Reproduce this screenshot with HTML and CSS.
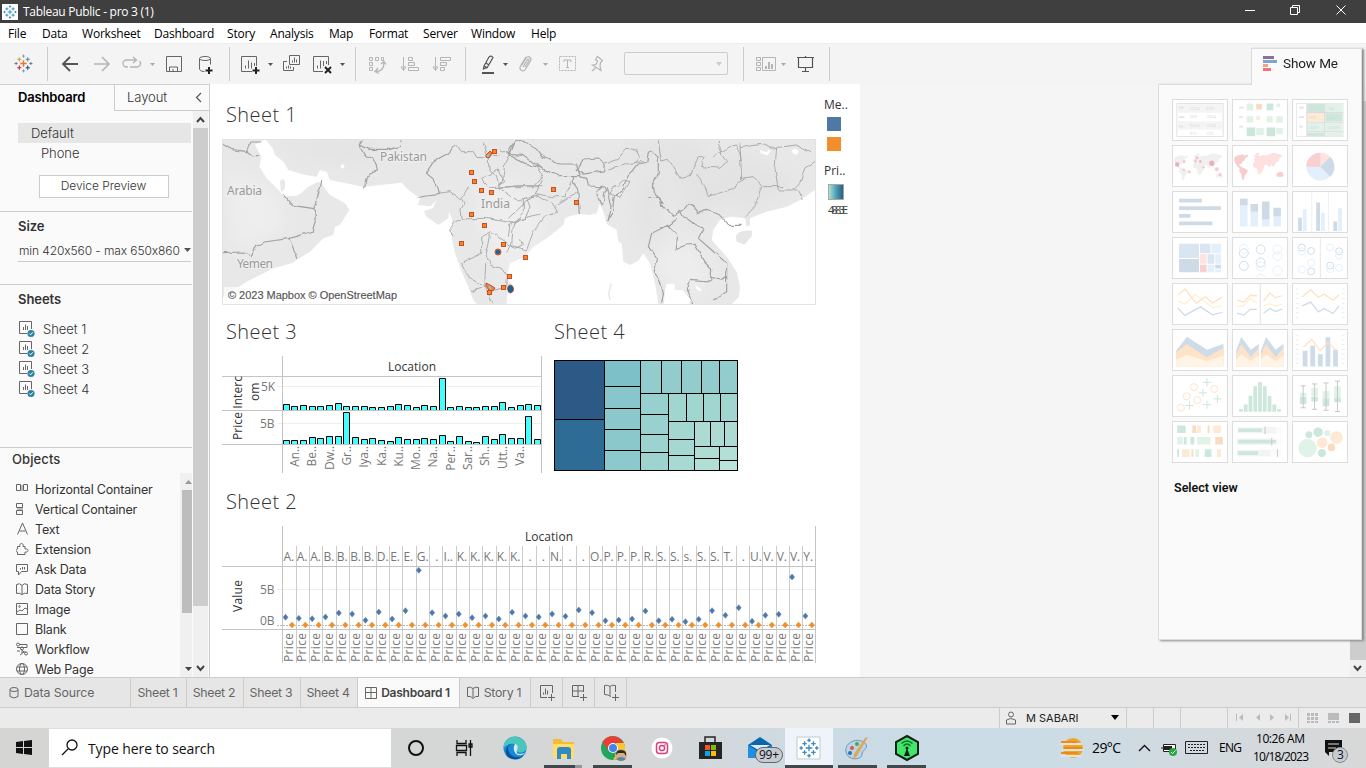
FILE: index.html
```html
<!DOCTYPE html>
<html lang="en">
<head>
<meta charset="utf-8">
<title>Tableau Public - pro 3 (1)</title>
<link rel="stylesheet" href="styles.css">
</head>
<body>
<svg class="defs" width="0" height="0">
  <defs>
    <symbol id="tableau" viewBox="0 0 18 18"><path d="M9 6v6M6 9h6" stroke="#e8762c" stroke-width="1.4"/><path d="M5 3v4M3 5h4" stroke="#c9a04a"/><path d="M13 3v4M11 5h4" stroke="#5b879b"/><path d="M5 11v4M3 13h4" stroke="#c72035"/><path d="M13 11v4M11 13h4" stroke="#1f457e"/><path d="M9 .5v3M7.500 2h3M9 14.500v3M7.500 16h3" stroke="#7199a6" stroke-width=".8"/><path d="M2 7.500v3M.5 9h3M16 7.500v3M14.500 9h3" stroke="#5c6692" stroke-width=".8"/></symbol>
    <symbol id="tableau-blue" viewBox="0 0 18 18"><path d="M9 6v6M6 9h6M5 3v4M3 5h4M13 3v4M11 5h4M5 11v4M3 13h4M13 11v4M11 13h4M9 .5v3M7.500 2h3M9 14.500v3M7.500 16h3M2 7.500v3M.5 9h3M16 7.500v3M14.500 9h3" stroke="#3b8bbd" stroke-width="1.2"/></symbol>
    <symbol id="sheet" viewBox="0 0 18 18"><path d="M9 13.500H1.500v-12h12V9" fill="none" stroke="#666"/><path d="M5.500 10V7M7.500 10V4.500M9.500 10V6" stroke="#666"/><circle cx="13" cy="13.500" r="3.600" fill="#3080a5"/><path d="M11.300 13.500l1.300 1.300 2.200-2.500" fill="none" stroke="#fff"/></symbol>
    <linearGradient id="heat"><stop offset="0" stop-color="#b9e2d8"/><stop offset=".5" stop-color="#4ba0b9"/><stop offset="1" stop-color="#2a5783"/></linearGradient>
    <filter id="rough" color-interpolation-filters="sRGB" filterUnits="userSpaceOnUse" x="222" y="139" width="594" height="166"><feTurbulence type="fractalNoise" baseFrequency=".14" numOctaves="1" seed="4"/><feDisplacementMap in="SourceGraphic" scale="5" xChannelSelector="R" yChannelSelector="G"/></filter>
    <filter id="soft"><feGaussianBlur stdDeviation="9"/></filter>
    <path id="world" d="M4 20l12-6 14-2 5 4 12-4-3 8-7 3-3 8-6 4-2 7-5-2-3 5 8 7 10 4 10 6-4 8-5 7-5 15-4-2-3-17-6-9 1-9-8-7-6-10-5-8zM64 17l9-9 10-2-3 9-9 7zM66 24l10-8 9 1 5-4 16 1 18-8 14 3 13 3 4 6-9 3-3 12-8 3-3 7-6 8-6-6-7 8-7-9-9 1-1 10-8 15-6 5-5-5-3-15-11-3-2-11 7-7-3-7zM134 74l9-8 10 2 4 9-4 7-8-3-9 1z"/>
  </defs>
</svg>
<div class="desktop">
  <header class="titlebar">
    <span class="app-icon"><svg width="14" height="14"><use href="#tableau-blue"/></svg></span>
    <span class="app-title">Tableau Public - pro 3 (1)</span>
    <svg class="window-buttons" width="121" height="23" fill="none" stroke="#fff"><path d="M0 10.500h10M45.500 7.500h7v7h-7zM47.500 7.500v-2h7v7h-2M91.500 5.500l9 9M100.500 5.500l-9 9"/></svg>
  </header>
  <nav class="menubar"><span class="m1">File</span><span class="m2">Data</span><span class="m3">Worksheet</span><span class="m4">Dashboard</span><span class="m5">Story</span><span class="m6">Analysis</span><span class="m7">Map</span><span class="m8">Format</span><span class="m9">Server</span><span class="m10">Window</span><span>Help</span></nav>
  <div class="toolbar">
    <svg width="48" height="41" viewBox="0 43 48 41"><use href="#tableau" x="14" y="54" width="19" height="19"/></svg>
    <svg width="182" height="41" viewBox="48 43 182 41" fill="none" stroke="#666"><path d="M63 64h15M70 57l-7 7 7 7" stroke-width="1.800" stroke="#555"/><path d="M94 64h15M102 57l7 7-7 7" stroke-width="1.600" stroke="#b5b5b5"/><path d="M128 67h-1.500a3.500 3.500 0 0 1 0-7h9.500M133 57l3.500 3-3.500 3M130 67h7a3.500 3.500 0 0 0 2.500-6" stroke="#b5b5b5" stroke-width="1.300"/><path d="M150 63h5l-2.500 3z" fill="#aaa" stroke="none"/><path d="M166.500 56.500h15v15h-15zM169.500 71v-4h8v4M173 71v-2" /><ellipse cx="205" cy="58.500" rx="5.500" ry="2"/><path d="M199.500 58.500v11q2 2.500 5 2M210.500 58.500v6"/><path d="M209 67v7M205.500 70.500h7" stroke="#222" stroke-width="2"/></svg>
    <svg width="126" height="41" viewBox="230 43 126 41" fill="none" stroke="#666"><path d="M252 71.500h-10.500v-15h15V66M245.500 68.500v-3M248.500 68.500v-8M251.500 68.500v-6M254.500 66v-3"/><path d="M256 67v7M252.500 70.500h7" stroke="#222" stroke-width="2"/><path d="M268 63h5l-2.500 3zM340 63h5l-2.500 3z" fill="#555" stroke="none"/><path d="M289.500 55.500h10v9h-10zM287 61.500h-3.500v9h10V67M292.500 62.500v-2M294.500 62.500v-5M296.500 62.500v-3M286.500 68.500v-2M288.500 68.500v-3M290.500 68.500v-2"/><path d="M323 71.500h-9.500v-15h15V65M317.500 68.500v-3M320.500 68.500v-8M323.500 66v-5M326.500 64v-3"/><path d="M325 67l6 6M331 67l-6 6" stroke="#222" stroke-width="2"/></svg>
    <svg width="110" height="41" viewBox="356 43 110 41" fill="none" stroke="#b5b5b5"><path d="M369.500 57.500h3v3h-3zM375.500 57.500h3v3h-3zM381.500 57.500h2v3h-2zM369.500 62.500h3v3h-3zM369.500 67.500h3v3h-3z"/><path d="M376 71.500c6 0 8-4 8-9M378 68l-3 3.500 4 2M381 64l3-2.500 2 3" stroke-width="1.300"/><path d="M403.500 57v13M401 67l2.500 3.500 2.500-3.500zM408.500 57.500h4v3h-4zM408.500 62.500h6v3h-6zM408.500 67.500h10v3h-10zM435.500 57v13M433 67l2.500 3.500 2.500-3.500zM440.500 57.500h10v3h-10zM440.500 62.500h6v3h-6zM440.500 67.500h4v3h-4z"/></svg>
    <svg width="153" height="41" viewBox="466 43 153 41" fill="none" stroke="#b5b5b5"><path d="M484 66l5-9q2-2 4 .5L487.500 67l-4 2zM484 66l3.500 2M486 63l3 2" stroke="#555" stroke-width="1.200"/><path d="M482 73h12" stroke="#555" stroke-width="2"/><path d="M503 63h5l-2.500 3z" fill="#555" stroke="none"/><path d="M543 63h5l-2.500 3z" fill="#aaa" stroke="none"/><path d="M522 65l4-7c3-3 6 0 4.500 3l-5 8c-2 4-7 1-5-3l5.500-9M523 67l4-7q2-2 2 .5l-4 6.500" stroke-width="1.200"/><rect x="559.500" y="56.500" width="16" height="14" stroke-dasharray="2 1"/><path d="M564 62v-2h7v2M567.500 60v7.500M566 67.500h3"/><path d="M595.500 59.500l2-3 5 4-2 2-.5 3.500 1 4.500-8.500-5.500 3.500-.5 1.500-3.500zM595.500 68l-3.500 3" stroke-width="1.200"/></svg>
    <div class="combo"><svg width="8" height="6"><path d="M1 1h6L4 5z" fill="#ccc"/></svg></div>
    <svg width="101" height="41" viewBox="729 43 101 41" fill="none" stroke="#b5b5b5"><path d="M743.500 47v34M829.500 47v34" stroke="#ccc"/><path d="M756.500 57.500h4v3h-4zM756.500 62.500h4v3h-4zM756.500 67.500h4v3h-4zM762.500 57.500h13v13h-13z"/><path d="M766 69v-3M769 69v-7M772 69v-5" stroke-width="2"/><path d="M781 63h5l-2.500 3z" fill="#aaa" stroke="none"/><path d="M797 57.500h17M798.500 58v9.500h14V58M805.500 56v2M805.500 68v4M802 71.500h7" stroke="#555" stroke-width="1.200"/></svg>
  </div>
  <main class="workspace">
    <aside class="sidebar">
      <div class="side-tabs"><b>Dashboard</b><div class="layout-tab"><span>Layout</span><svg width="7" height="12" fill="none" stroke="#555" stroke-width="1.200"><path d="M6 1L1.500 5.500 6 10"/></svg></div></div>
      <div class="side-body">
        <div class="side-content">
          <section class="devices"><div class="default">Default</div><div class="phone">Phone</div><div class="preview">Device Preview</div></section>
          <section class="size"><h4>Size</h4><div class="size-select"><span>min 420x560 - max 650x860</span><svg width="7" height="5"><path d="M0 0h7L3.500 4z" fill="#555"/></svg></div></section>
          <section class="sheets"><h4>Sheets</h4><ul><li><svg width="18" height="18"><use href="#sheet"/></svg>Sheet 1</li><li><svg width="18" height="18"><use href="#sheet"/></svg>Sheet 2</li><li><svg width="18" height="18"><use href="#sheet"/></svg>Sheet 3</li><li><svg width="18" height="18"><use href="#sheet"/></svg>Sheet 4</li></ul></section>
          <section class="objects"><h4>Objects</h4><div class="object-body"><ul>
            <li><svg width="14" height="14"><path d="M4.500 3h3v6h-3z" fill="#bbb" stroke="none"/><path d="M.5 2.500h4v6h-4zM7.500 2.500h4v6h-4z"/></svg>Horizontal Container</li>
            <li><svg width="14" height="14"><path d="M1 5h6v4H1z" fill="#bbb" stroke="none"/><path d="M.5 1.500h6v4h-6zM.5 8.500h6v4h-6z"/></svg>Vertical Container</li>
            <li><svg width="14" height="14"><path d="M1.500 12.500L6.500 1l5 11.500M3.500 9h6"/></svg>Text</li>
            <li><svg width="14" height="14"><path d="M1.500 4.500h2.500c-1.500-4 4.500-4 3 0h2v2.500c4-1 4 4 0 3v2.500h-7.500V10c-2 0-2-3 0-3z"/></svg>Extension</li>
            <li><svg width="14" height="14"><path d="M.5 2.500h11v7h-6l-3 3.500V9.500h-2zM4.500 7.500V6M6.500 7.500V5M8.500 7.500V5"/></svg>Ask Data</li>
            <li><svg width="14" height="14"><path d="M.5 2.500q3-2 5.500 1 2-3 5.500-1v9q-3-1-5.500 1-3-2-5.500-1zM6 3.500v9"/></svg>Data Story</li>
            <li><svg width="14" height="14"><path d="M.5 1.500h11v11H.5zM1 10l3-2 2 1 3-3 2 1"/><circle cx="3.500" cy="4.500" r=".8"/></svg>Image</li>
            <li><svg width="14" height="14"><path d="M.5 1.500h11v11H.5z"/></svg>Blank</li>
            <li><svg width="14" height="14"><path d="M3 2.500h8v3H1M4 9H1M5 10h5M3 5l5 5-4 3"/><circle cx="2" cy="2.500" r="1.500"/><circle cx="6" cy="6.500" r="1.500"/><circle cx="10" cy="11.500" r="1.500"/></svg>Workflow</li>
            <li><svg width="14" height="14"><circle cx="6" cy="7" r="5.500"/><ellipse cx="6" cy="7" rx="2.500" ry="5.500"/><path d="M1 5h10M1 9h10"/></svg>Web Page</li>
          </ul><div class="inner-scroll"><svg width="12" height="17"><path d="M5 11h7L8.500 7z" fill="#999"/></svg><i></i><svg width="12" height="17"><path d="M5 7h7l-3.500 4z" fill="#444"/></svg></div></div></section>
        </div>
        <div class="outer-scroll"><svg width="15" height="17" fill="none" stroke="#444" stroke-width="2"><path d="M4 11l3.500-4 3.500 4"/></svg><i></i><svg width="15" height="17" fill="none" stroke="#444" stroke-width="2"><path d="M4 6l3.500 4L11 6"/></svg></div>
      </div>
    </aside>
    <div class="dashboard">
      <div class="dash-top">
        <section class="sheet-map"><h2>Sheet 1</h2>
          <svg class="map" width="594" height="166" viewBox="222 139 594 166">
            <rect x="222" y="139" width="594" height="166" fill="#e8e8e8"/>
            <g filter="url(#soft)" fill="#e3e3e3"><path d="M280 140l95 0-10 22-50-4zM470 140l90 20 50 5 40-25h50l20 60-30 30-20-70-60 10-100-15zM730 150l70 30-50 30-50-20zM640 180l25-10-10 80-20-20z"/></g>
            <g filter="url(#soft)" fill="#eee"><path d="M225 170l50 20 10 40-50 20zM480 180l40 5 30 40-40 60-30-60zM650 260l30-20 30 30-20 30z"/></g>
            <g transform="translate(220 135) scale(.33333)" fill="#fff"><path d="M105 30L135 12 158 40 165 60 190 80 205 105 255 120 290 125 300 105 320 110 330 135 430 155 545 143 565 165 600 190 593 210 632 214 648 196 640 218 612 229 620 245 655 270 685 250 687 230 697 255 695 310 705 355 725 410 745 455 760 495 775 512 6 512 6 488 80 440 160 400 215 385 270 350 310 310 340 300 345 275 360 270 388 225 375 205 330 180 307 150 295 140 265 155 245 173 230 182 192 184 175 165 140 130 118 95 124 65z"/><path d="M363 90l8-2 3 8-8 5-4-4z"/></g>
            <path d="M280 181q4-4 5 1 1 8-4 10z" fill="#e8e8e8"/>
            <g transform="translate(500 90) scale(.33333)"><path fill="#fff" d="M190 405L195 385 210 378 240 372 270 375 290 370 300 340 315 380 320 402 350 420 355 455 365 460 370 515 390 525 415 512 430 490 450 520 465 580 475 643H20L22 610 32 585 20 560 30 520 75 500 100 470 140 445zM500 582l24-1v18l25 2 20 25v17h-78l5-43zM945 300L900 330 860 350 800 365 750 385 750 405 740 412 735 385 690 380 660 390 640 420 635 450 680 500 710 545 720 590 717 620 695 643h252zM780 181l20 6 8-10 4 7-10 12-20-7zM875 180l12-4 10 8-9 12-12-9zM587 585l20 15-8 4-12-10z"/><path d="M707 440q7-22 50-18l-2 17-22 25-23-9z" fill="#e6e6e6"/><path d="M334 580l-8 30 4 20" stroke="#e5e5e5" stroke-width="4" fill="none"/></g>
            <g fill="none" stroke="#a2a2a2" filter="url(#rough)">
              <g transform="translate(220 135) scale(.33333)" stroke-width="3.6"><path d="M8 28l28 16 42 5 18 13h22M78 49l15-28 28 0M192 178l25 33 65 10 10 17-15 50-70 23 27 60M205 311l-72 10-23 13-17 28-18-11-67 2M282 220l20-65 3-20M417 30l28 13 65 0 34-10 2-17M417 30l12-14M417 30l16 30 28 12 8 18 3 15-20 10-15 18-3 30M705 30l-20 25-38 20-27 40 20 17 10 25 5 22-35 4-32 5M880 25l-17 27M860 55l55 33 50 10"/><path stroke-width="2.600" d="M655 175l35-5 35 22 7 13-10 20 5 25-20 10-15 22 10 25M725 190l20-35M710 30l15 20 35 0 10 17 33 3 15-13 20 3M790 22l13 40 5 45 22 15 5 30 20-10-10-17-10-20-53 25 25 27 50 0 30-5 80 0M835 155l30 23 30 20 25-8 10 25-15 38-18 0-27 15-5 40M725 252l70-2 63 10 22 5 40-18 40-10M725 385l60-30 0-50 30-15 20 15 50 35 22-10-5-20M725 385l20 40 50 30 35 10 30-10 2-30-18-25-33-10-15-35 15-60M797 385l-3 70-40 15M795 455l20 48M865 250l70-65 25-5M835 150l12-7 8-60 30-60"/></g>
              <g transform="translate(500 90) scale(.33333)" stroke-width="3.6"><path d="M30 192l15-35 20-7M65 150l45 28 15 22 50 22 55 0 10 35-65 0-45-18-60-43-45-3M235 235l15-25 45-3 20 15 0 20-65 10-20-13M220 255l0 25 13 17 5 75M240 260l20 5 5 23 50 3 5 10-5 5-5 32-8 5-15-40 20-15M322 292l10 40-5 40-5 20 15-25 5-45 25-20 10-30 8-15 15-15 15-20 25-5 5-30 10-5 20 20 0 45-18 40 3 20 20 15 5 27 20 10 15 17 30-15 15-20 15 5 10 25 30-10 35 10 30 35 40 0M442 320l33 0 15 25M530 385l-25 20-50 25-10 40 25 35-10 40 20 25 10 40-5 25M540 360l10 20 30 20 30 15-15 30M500 405l30 30-5 45 35-15 25-2 30 55 20 20-3 35-60-5-10 30 20 60M595 445l40 35 45 40 0 85-40 25M630 560l30 10 20-10"/><path stroke-width="2.600" d="M0 180l30 12M310 220l45-15 25-30 30 5 10 20-20 20M325 240l65-20 35-5M475 150l5 40 5 20 20-5 35 60 30-5 10-25 15-35 20 0-10 30 55 5 20-20-15-20 0-10-10-20 0-20M590 250l25 40 10 30 75-25 35-30M725 270l-5-110M640 200l50-30 20-5 15 45M725 265l35-5 30 30 60 0M830 170l-5 65 10 65 60 0 15 30M735 380l30-30 20-60M720 170l60-10 30 15 80-10 40 20M945 215l-30 15-15 50-20 20M0 290l100 0 30-35-20-25M130 255l-25 60-35 15 0 35-30 40-5 60-15 25M110 320l50 20 15 25-40 15-35 45-20 55-50-15M105 310l50 10 40 0 20-45M170 345l30-20 30-15M350 290l20-20 20 5-30 50-30-15 15-25"/></g>
            </g>
            <g class="map-label"><text x="380" y="161" textLength="47">Pakistan</text><text x="227" y="195" textLength="35">Arabia</text><text x="237" y="268" textLength="36">Yemen</text><text x="481" y="208" textLength="29">India</text></g>
            <g id="markers"></g>
            <rect x="224" y="287" width="177" height="15" fill="#fff" opacity=".7"/>
            <text class="attribution" x="228" y="299" textLength="169">© 2023 Mapbox © OpenStreetMap</text>
            <path d="M222 139.500h593.500v165H222.500v-165" fill="none" stroke="#e2e2e2"/>
          </svg>
        </section>
        <div class="legends"><div>Me..</div><i class="blue"></i><i class="orange"></i><div class="price">Pri..</div><svg width="26" height="36"><rect x="6.500" y=".5" width="15" height="15" fill="url(#heat)" stroke="#aaa999"/><text x="6" y="30" textLength="20">4883E</text></svg></div>
      </div>
      <div class="dash-mid">
        <section><h2>Sheet 3</h2><svg id="bars" width="322" height="120" viewBox="220 355 322 120"></svg></section>
        <section class="sheet-tree"><h2>Sheet 4</h2><svg id="tree" width="186" height="112" viewBox="9 50 186 112" shape-rendering="crispEdges"></svg></section>
      </div>
      <section class="dash-bottom"><h2>Sheet 2</h2><svg id="scatter" width="600" height="140" viewBox="220 525 600 140"></svg></section>
    </div>
    <div class="backdrop"></div>
    <div class="page-scroll"><i></i><svg width="16" height="17" fill="none" stroke="#444" stroke-width="2"><path d="M4 6l3.500 4L11 6"/></svg></div>
  </main>
  <div class="show-me">
    <div class="show-tab"><svg width="15" height="16"><path d="M0 0h11v3H0z" fill="#88709b"/><path d="M0 4h14v3H0z" fill="#7fa5cc"/><path d="M0 8h5v3H0z" fill="#f0a584"/><path d="M0 12h8v3H0z" fill="#fa6c80"/></svg><span>Show Me</span></div>
    <div class="show-body">
      <div class="thumbs">
        <svg viewBox="0 0 168 126"><path d="M11 11h146v104H11z" fill="#fff" stroke="#e2e2e2" stroke-width="3"/><path d="M13 13h142v27H13zM13 67h142v26H13z" fill="#f4f4f4"/><path d="M18 24h15M18 54h17M18 84h13" stroke="#e3e3e3" stroke-width="6"/><g class="tiny"><text x="52" y="31">1234</text><text x="104" y="31">678</text><text x="52" y="58">368</text><text x="104" y="58">3034</text><text x="52" y="85">2620</text><text x="104" y="85">2558</text><text x="52" y="110">971</text><text x="104" y="110">322</text></g></svg>
        <svg viewBox="0 0 168 126"><path d="M18 24h15M18 54h12M18 84h12" stroke="#e6e6e6" stroke-width="6"/><path d="M42 11h21v22H42zM135 11h12v12h-12zM42 51h21v20H42zM105 51h19v20h-19zM135 51h21v21h-21zM72 88h24v23H72zM135 88h21v20h-21z" fill="#e1f2e7"/><path d="M105 11h21v21h-21zM42 87h27v27H42zM105 87h27v27h-27z" fill="#cbe6da"/><path d="M72 12h18v18H72z" fill="#f9dcc0"/><path d="M72 51h12v12H72z" fill="#feead4"/></svg>
        <svg viewBox="0 0 168 126"><path d="M10 11h147v104H10z" fill="#fff" stroke="#ddd" stroke-width="2"/><path d="M44 12h54v27H44zM101 42h54v26h-54zM44 102h54v12H44z" fill="#cee7dc"/><path d="M101 12h54v27h-54zM44 72h54v26H44zM101 72h54v26h-54zM101 102h54v12h-54z" fill="#e1f3e8"/><path d="M44 42h54v26H44z" fill="#ffead3"/><path d="M43 12v102M99 12v102M43 40h114M43 70h114M43 100h114" stroke="#d6d6d6" stroke-width="3"/><path d="M18 24h15M18 54h15M18 84h12" stroke="#e3e3e3" stroke-width="6"/><g class="tiny"><text x="48" y="31">1234</text><text x="107" y="31">546</text><text x="48" y="61">368</text><text x="107" y="61">343</text><text x="48" y="91">2620</text><text x="107" y="91">53890</text></g></svg>
        <svg viewBox="0 0 168 126"><use href="#world" y="17" fill="#f0f0f0"/><g fill="#f9bfc0" opacity=".8"><circle cx="12" cy="58" r="7" fill="#e8a0ae"/><circle cx="121" cy="54" r="8" fill="#e8a0ae"/><circle cx="34" cy="49" r="5"/><circle cx="69" cy="47" r="5"/><circle cx="85" cy="49" r="4" fill="#e8a0ae"/><circle cx="74" cy="37" r="5"/><circle cx="137" cy="73" r="6"/><circle cx="50" cy="81" r="5"/><circle cx="33" cy="75" r="4"/><circle cx="95" cy="67" r="4"/><circle cx="147" cy="91" r="4"/></g></svg>
        <svg viewBox="0 0 168 126"><use href="#world" y="15" fill="#ffe0e0"/><path d="M4 35l12-6 14-2 5 4 12-4-3 8-7 3-3 8-6 4-2 7-5-2-3 5 8 7 10 4 10 6-4 8-5 7-5 15-4-2-3-17-6-9 1-9-8-7-6-10zM138 87l9-7 10 5 1 10-10 2-10-1z" fill="#f8cdcd"/></svg>
        <svg viewBox="0 0 168 126"><circle cx="85" cy="65" r="44" fill="#e2f0fb"/><path d="M85 65V21a44 44 0 0 1 31 13z" fill="#ffe2e2"/><path d="M85 65l31-31a44 44 0 0 1 0 63z" fill="#cedae7"/><path d="M85 65H41a44 44 0 0 1 44-44z" fill="#f7d0cf"/></svg>
        <svg viewBox="0 0 168 126"><path d="M18 27h72M18 51h132M18 75h36M18 99h105" stroke="#cedbe7" stroke-width="12"/></svg>
        <svg viewBox="0 0 168 126"><path d="M33 109V42M66 109V62M102 109V87M138 109V77" stroke="#e2f0fb" stroke-width="24"/><path d="M33 42V21M66 62V38M102 87V30M138 77V50" stroke="#cedbe7" stroke-width="24"/></svg>
        <svg viewBox="0 0 168 126"><path d="M58 0v126M111 0v126" stroke="#e6e6e6" stroke-width="2"/><path d="M21 123V81M78 123V33M132 123V93" stroke="#cedbe7" stroke-width="12"/><path d="M36 123V54M93 123V66M147 123V51" stroke="#e2f0fb" stroke-width="12"/></svg>
        <svg viewBox="0 0 168 126"><path d="M18 18h63v45H18zM84 18h33v30H84z" fill="#d9e6f1"/><path d="M18 66h63v42H18zM132 84h18v12h-18z" fill="#cedbe7"/><path d="M120 18h30v30h-30zM132 51h18v30h-18zM108 84h21v24h-21zM132 99h18v9h-18z" fill="#e2f0fb"/><path d="M108 51h21v30h-21z" fill="#d9e6f1"/><path d="M84 51h21v30H84z" fill="#ffe2e2"/><path d="M84 84h21v24H84z" fill="#f7d0cf"/></svg>
        <svg viewBox="0 0 168 126" class="rings"><g stroke="#cedbe7"><circle cx="33" cy="48" r="14"/><circle cx="33" cy="88" r="14"/><circle cx="86" cy="36" r="14"/><circle cx="86" cy="77" r="14"/></g><g stroke="#e2f0fb"><circle cx="33" cy="34" r="14"/><circle cx="86" cy="90" r="14"/><circle cx="139" cy="36" r="14"/><circle cx="139" cy="57" r="14"/><circle cx="139" cy="103" r="14"/><path d="M72 123q14-18 28 0"/></g></svg>
        <svg viewBox="0 0 168 126" class="rings"><path d="M85 0v126" stroke="#e6e6e6"/><g stroke="#cedbe7"><circle cx="27" cy="30" r="11"/><circle cx="56" cy="41" r="11"/><circle cx="144" cy="42" r="11"/><circle cx="56" cy="105" r="11"/><circle cx="116" cy="87" r="11"/></g><g stroke="#e2f0fb"><circle cx="27" cy="42" r="11"/><circle cx="56" cy="78" r="11"/><circle cx="27" cy="99" r="11"/><circle cx="116" cy="30" r="11"/><circle cx="144" cy="56" r="11"/><circle cx="144" cy="94" r="11"/><circle cx="116" cy="98" r="11"/></g></svg>
        <svg viewBox="0 0 168 126" class="lines"><path d="M14 54l23 9 32-30 55 42 29-7" stroke="#fff0d1"/><path d="M16 34l21-18 35 45 29-21 22 20 30-18" stroke="#ffe0c2"/><path d="M14 75l22 24 50-27 37 25 31-8" stroke="#cddbe8"/></svg>
        <svg viewBox="0 0 168 126" class="lines"><path d="M85 0v126" stroke="#e6e6e6"/><path d="M12 71l20-2 20-24 22 15M95 70l20-8 18 8 21-7" stroke="#fff0d1"/><path d="M12 51l21 6 20-21 21 1M95 54l20-25 18 14 21-6" stroke="#ffe0c2"/><path d="M12 92l21 6 20-18h21M95 92l20-15 18 10 21-8" stroke="#cddbe8"/></svg>
        <svg viewBox="0 0 168 126" class="lines"><path class="ticks" d="M12 15v96M157 15v96"/><path d="M28 41l27-23 24 24 18-10 28 19 19-17" stroke="#ffe0c2"/><path d="M28 69l27-12 24 31 18-11 28 16 19-24" stroke="#cddbe8"/></svg>
        <svg viewBox="0 0 168 126"><path d="M9 65l34-44 63 41 52-18v64l-149 5z" fill="#cedbe8"/><path d="M9 69l34-24 63 41 52-30v60H9z" fill="#fee3c9"/><path d="M9 93l34-15 63 20 52-17v35H9z" fill="#fff4e6"/></svg>
        <svg viewBox="0 0 168 126"><path d="M9 65l16-43 30 40 25-18v70H9zM87 65l16-43 30 40 25-18v70H87z" fill="#cedbe8"/><path d="M9 76l16-32 30 42 25-30v60H9zM87 76l16-32 30 42 25-30v60H87z" fill="#fee3c9"/><path d="M9 93l16-16 30 21 25-18v36H9zM87 93l16-16 30 21 25-18v36H87z" fill="#fff4e6"/></svg>
        <svg viewBox="0 0 168 126"><path class="ticks" d="M12 15v96M157 15v96"/><path d="M37 115V65M61 115V50M85 115V76M109 115V23M133 115V62" stroke="#cedbe8" stroke-width="15"/><path d="M32 54l26-25 26 36 25-25 27 25" stroke="#ffe0c2" stroke-width="4" fill="none"/></svg>
        <svg viewBox="0 0 168 126" class="rings"><g stroke="#ffe2c7"><circle cx="24" cy="100" r="11"/><circle cx="42" cy="64" r="11"/><circle cx="65" cy="35" r="11"/><circle cx="75" cy="76" r="11"/><circle cx="129" cy="41" r="11"/></g><path d="M93 20h26M106 7v26M80 53h26M93 40v26M126 72h26M139 59v26M38 93h26M51 80v26M93 90h26M106 77v26" stroke="#cbe6da"/></svg>
        <svg viewBox="0 0 168 126"><path d="M24 113v-9M39 113V90M54 113V62M69 113V32M84 113V20M99 113V32M114 113V63M129 113V90M144 113v-9" stroke="#cee7dc" stroke-width="12"/></svg>
        <svg viewBox="0 0 168 126"><path d="M31 64V53M67 64V38M103 71V47M139 68V32" stroke="#e1f3e8" stroke-width="21"/><path d="M31 88V65M67 80V65M103 95V71M139 83V68" stroke="#cee7dc" stroke-width="21"/><path d="M31 100V31M67 105V25M103 108V22M139 112V16M23 31h16M23 100h16M59 25h16M59 105h16M95 22h16M95 108h16M131 16h16M131 112h16" stroke="#c5c5c5" stroke-width="3"/></svg>
        <svg viewBox="0 0 168 126"><path d="M12 11h27v24H12zM33 47h9v24h-9zM54 47h12v24H54zM12 86h6v24h-6zM99 86h21v24H99z" fill="#cee7dc"/><path d="M12 47h18v24H12zM75 47h42v24H75zM69 86h12v24H69z" fill="#e1f3e8"/><path d="M60 11h12v24H60zM108 11h6v24h-6zM132 47h24v24h-24zM57 86h6v24h-6z" fill="#f9dcc0"/><path d="M75 11h12v24H75zM126 11h24v24h-24zM27 86h24v24H27zM138 86h12v24h-12z" fill="#feead4"/></svg>
        <svg viewBox="0 0 168 126"><path d="M12 26h140M12 62h140M12 98h140" stroke="#fbfbfb" stroke-width="21"/><path d="M90 26h45M12 62h105M12 98h105" stroke="#f4f4f4" stroke-width="20"/><path d="M15 26h75M15 62h120M15 98h63" stroke="#cee7dc" stroke-width="12"/><path d="M100 14v24M121 50v24M139 86v24" stroke="#c5c5c5" stroke-width="3"/></svg>
        <svg viewBox="0 0 168 126"><g fill="#e1f3e8"><circle cx="45" cy="82" r="29"/><circle cx="107" cy="35" r="10"/></g><g fill="#cee7dc"><circle cx="49" cy="40" r="11"/><circle cx="78" cy="32" r="15"/><circle cx="90" cy="98" r="13"/></g><circle cx="136" cy="49" r="20" fill="#feead4"/><circle cx="91" cy="65" r="17" fill="#feead4"/><circle cx="120" cy="80" r="12" fill="#f9dcc0"/></svg>
      </div>
      <b>Select view</b>
    </div>
  </div>
  <div class="sheet-tabs">
    <div class="t-source"><svg width="10" height="12"><ellipse cx="5" cy="2.500" rx="4" ry="2"/><path d="M1 2.500v7q4 3 8 0v-7"/></svg>Data Source</div><div class="t1">Sheet 1</div><div class="t2">Sheet 2</div><div class="t3">Sheet 3</div><div class="t4">Sheet 4</div>
    <div class="active"><svg width="12" height="12"><path d="M.5.5h11v11H.5zM6 .5v11M.5 5.500h11"/></svg><b>Dashboard 1</b></div>
    <div class="t-story"><svg width="12" height="13"><path d="M.5 1.500q3-1 5.500 1 2-2 5.500-1v9q-3-1-5.500 2-2-3-5.500-2zM6 2.500v9"/></svg>Story 1</div>
    <div class="new n1"><svg width="18" height="18"><path d="M9 13.500H2.500v-12h12V9M5.500 10.500v-2M7.500 10.500v-6M9.500 10.500v-4M13.500 10v7M10 13.500h7"/></svg></div><div class="new n2"><svg width="18" height="18"><path d="M9 12.500H2.500v-11h11V8M8 1.500v11M2.500 7h11M13.500 10v7M10 13.500h7"/></svg></div><div class="new n3"><svg width="18" height="18"><path d="M9 12.500q-3-2-6.500-2v-9q3-1 5.500 1 2-2 5.500-1V8M8 2.500v9M13.500 10v7M10 13.500h7"/></svg></div>
  </div>
  <div class="statusbar"><div class="user"><svg width="12" height="14" fill="none" stroke="#666"><circle cx="6" cy="3.500" r="2.500"/><path d="M1.500 13v-4q4-3 9 0v4z"/></svg><span>M SABARI</span><svg width="9" height="6"><path d="M0 0h8L4 5z"/></svg></div><i></i><i></i><i class="wide"></i>
    <svg class="paging" width="71" height="20" fill="#bbb"><path d="M9 6v7H8V6zM15 6v7l-4-3.500zM32 6v7l-4-3.500zM42 6v7l4-3.500zM57 6v7l4-3.500zM62 6v7h1V6z"/></svg><svg width="67" height="20"><path d="M8 5h3v3H8zM12 5h3v3h-3zM16 5h3v3h-3zM8 9h3v3H8zM12 9h3v3h-3zM16 9h3v3h-3zM8 13h3v2H8zM12 13h3v2h-3zM16 13h3v2h-3zM29 5h11v7H29zM29 13h3v2h-3zM33 13h3v2h-3zM37 13h3v2h-3z" fill="#bbb"/><path d="M50 5h11v10H50z" fill="#666"/></svg></div>
  <footer class="taskbar">
    <svg width="49" height="40"><path d="M16 14l7-1v6h-7zM24 13l8-1v7h-8zM16 20h7v6l-7-1zM24 20h8v7l-8-1z" fill="#111"/></svg>
    <div class="search"><svg width="20" height="20" fill="none" stroke="#111" stroke-width="1.300"><circle cx="12" cy="7" r="5"/><path d="M8 11l-6 6"/></svg><span>Type here to search</span></div>
    <svg class="apps" width="640" height="40" viewBox="391 728 640 40">
      <circle cx="416" cy="748" r="7" fill="none" stroke="#111" stroke-width="2"/><path d="M457 740v3.500h9V740M457 756v-3.500h9v3.500M456.500 745.500h10v5h-10zM470.500 740v16M469 744h3v3h-3z" fill="none" stroke="#111" stroke-width="1.300"/>
      <circle cx="515" cy="748" r="11.500" fill="#168ad3"/><path d="M503.500 748c0-14 20-15 23-2 1 7-8 8-10 5 3-6-6-11-13-3z" fill="#4bc6ba"/><path d="M508 748c0 6 6 12 15 8-6 6-18 3-17-5q0-5 5-7c-2 2-3 2-3 4z" fill="#114d9b"/><path d="M515 744q4 1 2 6-2 6 8 3-4 4-9 1-4-5-1-10z" fill="#dce7f0"/>
      <path d="M553 739h8l2 3h11v16h-21z" fill="#f5bd37"/><path d="M553 744h21v14h-21z" fill="#ffdd68"/><path d="M557 750q0-3 3-3h8q3 0 3 3v9h-4v-5h-6v5h-4z" fill="#328ac5"/>
      <circle cx="613" cy="748" r="12" fill="#21a65b"/><path d="M602.500 742a12 12 0 0 1 21 1H613l-5 7z" fill="#e83e33"/><path d="M624 743a12 12 0 0 1-11 17l5-9-2-8z" fill="#fbc82c"/><circle cx="613" cy="748" r="5" fill="#fff"/><circle cx="613" cy="748" r="4" fill="#4384eb"/><circle cx="621" cy="755" r="6" fill="#d5ad88"/><path d="M616 755q0-5 5-5 6 0 5 6l-2-3h-6z" fill="#302821"/><path d="M616 759q5-4 10 0-5 4-10 0" fill="#5888a0"/>
      <circle cx="662" cy="748" r="10.500" fill="#fff"/><g fill="none" stroke="#df3f78" stroke-width="1.500"><rect x="656.500" y="742.500" width="11" height="11" rx="3"/><circle cx="662" cy="748" r="2.600"/></g><circle cx="665" cy="745" r=".8" fill="#bf32aa"/>
      <path d="M699 742h23v17h-23z" fill="#252525"/><path d="M705 742v-5h10v5" fill="none" stroke="#252525" stroke-width="1.500"/><path d="M705 745h5v5h-5z" fill="#f35325"/><path d="M711 745h5v5h-5z" fill="#81bc06"/><path d="M705 751h5v5h-5z" fill="#05a6f0"/><path d="M711 751h5v5h-5z" fill="#ffba08"/>
      <path d="M748 745l12-8 12 8v13h-24z" fill="#0867ad"/><path d="M748 745l12 8 12-8v13h-24z" fill="#228ee0"/><path d="M750 745h20l-10 6z" fill="#dbeaf4"/><rect x="755.500" y="747.500" width="27" height="15" rx="7.500" fill="#c5cbd2" stroke="#666"/><text class="badge" x="759" y="759" textLength="20">99+</text>
      <path d="M785 728h48v40h-48z" fill="#eef4f9"/><path d="M797 737h23v22h-23z" fill="#fff" stroke="#bcc"/><use href="#tableau-blue" x="799" y="738" width="20" height="20"/>
      <path d="M846 752c-2-10 12-15 19-9 4 5-1 6-3 10 2 7-14 9-16-1z" fill="#b9d5ec" stroke="#7196b5"/><circle cx="852" cy="748" r="2" fill="#e85437"/><circle cx="857" cy="744" r="2" fill="#4aa94c"/><circle cx="850" cy="753" r="2" fill="#2873b6"/><path d="M868 737l-11 19-4 4 1-6 11-16z" fill="#e2a755"/>
      <path d="M907 736l11 6v12l-11 6-11-6v-12z" fill="#42e66b" stroke="#142119" stroke-width="2"/><path d="M907 748l-3 8h6z" fill="#142119"/><circle cx="907" cy="748" r="1.500" fill="#142119"/><path d="M903.500 746q3.500-4 7 0M901.500 743.500q5.500-5 11 0" fill="none" stroke="#172" stroke-width="1.500"/>
      <path d="M544 766.500h38M593 766.500h39M785 766.500h48M838 766.500h39M887 766.500h39" stroke="#40484c" stroke-width="3"/><path d="M575 766.500h7" stroke="#92999b" stroke-width="3"/>
    </svg>
    <svg class="tray" width="335" height="40" viewBox="1031 728 335 40"><circle cx="1073" cy="748" r="10" fill="#f5a524"/><path d="M1060 744h22M1062 750h22M1060 756h21" stroke="#dce4e9" stroke-width="2"/><path d="M1061 742h16M1064 748h18M1061 753h17" stroke="#ed8b17" stroke-width="2"/><text x="1092" y="753" class="temp" textLength="29">29°C</text><path d="M1139 751l5.500-5.500 5.500 5.500" fill="none" stroke="#111" stroke-width="1.400"/><path d="M1163.500 744.500h12v7h-12zM1161 748h2" fill="#fff" stroke="#222"/><path d="M1164 746h8v4h-8z" fill="#222"/><circle cx="1173" cy="752" r="4" fill="#27a742"/><path d="M1171 752l1.500 1.500 3-3" fill="none" stroke="#fff"/><path d="M1185.500 741.500h22v12h-22z" fill="none" stroke="#222"/><path d="M1188 744.500h18M1188 747.500h18M1190 750.500h14" stroke="#222" stroke-dasharray="2 1"/><text x="1219" y="752" textLength="23">ENG</text><text x="1256" y="743" textLength="49">10:26 AM</text><text x="1253" y="761" textLength="56">10/18/2023</text><path d="M1325 740h17v12h-13v4l-4-4z" fill="#111"/><path d="M1328 744h11M1328 748h8" stroke="#ddd"/><circle cx="1340" cy="755" r="7.500" fill="#c4ccd2" stroke="#888"/><text class="badge" x="1337" y="759">3</text></svg>
  </footer>
</div>
<script src="charts.js"></script>
</body>
</html>
```
FILE: styles.css
```css
* { box-sizing: border-box; }
body { margin: 0; overflow: hidden; font: 12px "Open Sans", "Noto Sans", sans-serif; color: #333; }
.defs { display: block; height: 0; }
.desktop { position: relative; width: 1366px; height: 768px; display: flex; flex-direction: column; background: #f5f5f5; }
svg { flex: none; display: block; }
h2, h4, ul { margin: 0; padding: 0; }
ul { list-style: none; }
.titlebar { height: 23px; flex: none; background: #3f3f3f; color: #fff; display: flex; align-items: center; padding-left: 2px; }
.app-icon { width: 16px; height: 16px; background: #fff; padding: 1px; margin-right: 5px; }
.app-title { letter-spacing: -.28px; }
.window-buttons { margin-left: auto; }
.menubar { height: 20px; flex: none; background: #fff; color: #000; display: flex; line-height: 21px; padding-left: 8px; letter-spacing: -.2px; }
.menubar span { white-space: nowrap; }
.m1 { width: 34px; } .m2 { width: 40px; } .m3 { width: 72px; } .m4 { width: 73px; } .m5 { width: 43px; } .m6 { width: 59px; } .m7 { width: 40px; } .m8 { width: 54px; } .m9 { width: 48px; } .m10 { width: 60px; }
.toolbar { height: 41px; flex: none; display: flex; background: #f4f4f4; border-top: 1px solid #eee; }
.toolbar > svg { margin-top: -1px; background: linear-gradient(#ccc, #ccc) right 4px / 1px 34px no-repeat; }
.toolbar > svg:nth-of-type(5), .toolbar > svg:last-child { background: none; }
.combo { width: 104px; height: 23px; border: 1px solid #ccc; border-radius: 2px; margin: 8px 1px 0 5px; display: flex; align-items: center; justify-content: flex-end; padding-right: 4px; }
.workspace { height: 593px; flex: none; display: flex; }
.sidebar { width: 210px; background: #fafafa; border-right: 1px solid #ccc; border-top: 1px solid #d0d0d0; display: flex; flex-direction: column; font-size: 13px; font-family: Inter, "Open Sans", sans-serif; font-weight: 300; letter-spacing: -.05px; color: #333; }
.side-tabs { height: 26px; display: flex; flex: none; line-height: 25px; }
.side-tabs b { width: 114px; padding-left: 18px; color: #000; font-weight: 600; letter-spacing: -.15px; }
.layout-tab { flex: 1; border: solid #ccc; border-width: 0 0 1px 1px; display: flex; align-items: center; justify-content: space-between; padding: 0 7px 0 12px; }
.side-body { display: flex; flex: 1; min-height: 0; }
.side-content { width: 193px; overflow: hidden; border-right: 1px solid #fafafa; }
section h4 { font-size: 13px; font-weight: 600; color: #333; }
.devices { height: 101px; padding: 12px 1px 0 18px; border-bottom: 1px solid #ccc; }
.default { height: 20px; line-height: 20px; background: #e6e6e6; padding-left: 13px; }
.phone { line-height: 20px; padding-left: 23px; }
.preview { width: 130px; height: 23px; margin: 12px 0 0 21px; border: 1px solid #ccc; line-height: 20px; text-align: center; background: #fff; font-size: 12px; padding-right: 1px; }
.size { height: 73px; border-bottom: 1px solid #ccc; padding: 6px 1px 0 18px; }
.size-select { display: flex; align-items: center; justify-content: space-between; height: 21px; margin-top: 7px; padding: 0 0 2px 1px; border-bottom: 1px solid #ccc; font-size: 12px; letter-spacing: -.1px; white-space: nowrap; }
.sheets { height: 163px; border-bottom: 1px solid #ccc; padding: 6px 0 0 18px; }
.sheets ul { margin-top: 12px; }
.sheets li { height: 20px; display: flex; align-items: center; gap: 7px; }
.objects h4 { padding: 3px 0 6px 12px; font-weight: 500; letter-spacing: .1px; }
.object-body { display: flex; }
.object-body ul { width: 180px; padding: 6px 0 0 16px; }
.object-body li { height: 20px; display: flex; align-items: center; gap: 5px; font-size: 12.500px; font-weight: 400; letter-spacing: -.2px; white-space: nowrap; }
.object-body li svg { fill: none; stroke: #666; }
.inner-scroll { width: 12px; height: 204px; background: #f0f0f0; display: flex; flex-direction: column; }
.inner-scroll i { height: 123px; margin: 0 0 auto 2px; background: #bdbdbd; }
.outer-scroll { width: 15px; background: #f0f0f0; display: flex; flex-direction: column; }
.outer-scroll i { height: 478px; margin-bottom: auto; background: #cdcdcd; }
.dashboard { width: 650px; background: #fff; padding: 18px 0 0 12px; overflow: hidden; }
h2 { height: 37px; padding-left: 4px; font: 300 20px/26px "Open Sans", sans-serif; letter-spacing: .45px; color: #333; }
.dash-top { display: flex; height: 217px; }
.legends { margin: -7px 0 0 6px; width: 26px; overflow: hidden; }
.legends div { line-height: 20px; padding-left: 2px; }
.legends i { display: block; width: 14px; height: 14px; margin: 2px 0 6px 5px; }
.legends .blue { background: #4e79a7; } .legends .orange { background: #f28e2b; }
.legends .price { margin: 10px 0 3px; }
.legends text { font-size: 11px; fill: #444; }
.map-label { font: 12px "Noto Sans", sans-serif; fill: #999; stroke: #f0f0f0; stroke-width: 2px; paint-order: stroke; }
.attribution { font: 11px "Liberation Sans", sans-serif; fill: #555; stroke: #555; stroke-width: .15px; }
.dash-mid { display: flex; height: 170px; }
.dash-mid h2, .dash-bottom h2 { height: 36px; }
.dash-mid section:first-child { width: 328px; }
#bars, #scatter { margin-left: -2px; }
.sheet-tree h2 { padding-left: 4px; }
.sheet-tree #tree { margin: 5px 0 0 4px; }
.axis { font-size: 12px; fill: #777; letter-spacing: -.1px; }
.head { font-size: 12px; fill: #333; }
.backdrop { width: 490px; }
.page-scroll { width: 16px; background: #f0f0f0; display: flex; flex-direction: column; padding-top: 17px; }
.page-scroll i { height: 559px; background: #cdcdcd; }
.show-me { position: absolute; left: 1158px; top: 48px; width: 204px; height: 592px; filter: drop-shadow(2px 1px 1px #888); }
.show-tab { position: relative; z-index: 1; width: 111px; height: 37px; margin-left: 93px; background: #fafafa; border: 1px solid #ddd; border-bottom: 0; display: flex; padding: 7px 0 0 11px; gap: 5px; font: 13.500px/15px Roboto, sans-serif; letter-spacing: -.1px; color: #222; }
.show-body { height: 556px; margin-top: -1px; border: 1px solid #ddd; background: #fafafa; padding: 14px 13px; }
.show-body b { display: block; margin: 17px 0 0 2px; font: 600 12.500px/16px Roboto, sans-serif; color: #111; }
.thumbs { display: grid; grid-template-columns: repeat(3, 56px); gap: 4px; }
.thumbs svg { width: 56px; height: 42px; border: 1px solid #ddd; background: #fff; }
.tiny { font: 15px "Liberation Serif", serif; fill: #d8d8d8; }
.rings { fill: none; stroke-width: 3px; }
.lines { fill: none; stroke-width: 4px; }
.ticks { fill: none; stroke: #e6e6e6; stroke-width: 9px; stroke-dasharray: 2 13; }
.sheet-tabs { height: 31px; flex: none; display: flex; background: #e6e6e6; border: solid #ccc; border-width: 1px 0; font: 12.300px/29px Inter, sans-serif; color: #666; letter-spacing: -.25px; }
.sheet-tabs > div { border-right: 1px solid #ccc; display: flex; align-items: center; justify-content: center; white-space: nowrap; gap: 5px; padding-right: 2px; }
.sheet-tabs svg { fill: none; stroke: #666; }
.sheet-tabs .t-source { width: 131px; justify-content: flex-start; padding-left: 9px; letter-spacing: -.1px; }
.t1 { width: 56px; } .t2 { width: 57px; } .t3 { width: 57px; } .t4 { width: 57px; }
.sheet-tabs .active { width: 102px; background: #fafafa; color: #444; gap: 4px; }
.active b { font-weight: 600; font-size: 12px; }
.t-story { width: 71px; }
.sheet-tabs .new { width: 32px; padding: 0; }
.statusbar { height: 20px; flex: none; background: #ebebeb; display: flex; font: 11px/20px Inter, sans-serif; color: #222; }
.user { margin-left: 999px; width: 128px; border: solid #ccc; border-width: 0 1px; display: flex; align-items: center; padding: 0 6px 0 5px; }
.user span { margin-left: 9px; flex: 1; }
.statusbar i { width: 27px; border-right: 1px solid #ccc; } .statusbar .wide { width: 47px; }
.statusbar .paging { border-right: 1px solid #ccc; }
.taskbar { height: 40px; flex: none; display: flex; background: linear-gradient(90deg, #d5d5d3, #d5d7d8 48%, #cbdbe5 62%, #cbdce6 75%, #d8d8d8); color: #111; }
.search { width: 342px; background: #fff; border: solid #ddd; border-width: 1px 0 1px 0; display: flex; align-items: center; padding-left: 11px; gap: 8px; font-size: 14px; letter-spacing: -.1px; }
.tray { margin-left: auto; font: 12px "Open Sans", sans-serif; }
.temp { font-size: 14px; }
.badge { font: 12px "Open Sans", sans-serif; fill: #111; }
```
FILE: charts.js
```js
const el = id => document.getElementById(id);
const line = (d, color, extra = '') => `<path d="${d}" fill="none" stroke="${color}" ${extra}/>`;

const places = [[494,151],[471,172],[474,181],[481,190],[491,192],[471,214],[484,225],[461,243],[503,244],[525,257],[509,276],[503,287],[489,292],[553,189],[576,202]];
el('markers').innerHTML = places.map(([x, y]) => `<rect x="${x - 1.5}" y="${y - 1.5}" width="4" height="4" fill="#f78526" stroke="#c94d25"/>`).join('') +
  `<path d="M486 155l4-4 2 2-3 5-3-1zM486 283l4 2 5 3-2 3-4-1-3-4z" fill="#f78526" stroke="#c94d25"/><path d="M487 156.500l2-2M489 286l2 3" stroke="#79c6ef" stroke-width="2"/>` +
  `<circle cx="498" cy="252" r="3" fill="#f7a566" stroke="#c94d25"/><circle cx="498" cy="252" r="2.300" fill="#285e8c"/><ellipse cx="510.500" cy="289" rx="3" ry="4" fill="#285e8c" stroke="#c94d25" stroke-dasharray="3 2"/>`;

const counts = [283,289,286,289,289,286,280,289,289,289,292,292,289,283,286,292,286,289,205,292,289,292,292,289,289,277,292,286,283,286];
const prices = [391,391,391,382,385,379,379,307,382,388,385,391,394,382,388,388,385,388,376,394,379,394,397,379,388,373,385,385,319,388];
const columns = (tops, base) => tops.map((t, i) => {
  const x = Math.floor(283.3 + i * 8.66) + .5, y = 310 + Math.floor(t / 3) + .5;
  return `<path d="M${x} ${base}V${y}h6V${base}" fill="#4ff" stroke="#000"/>`;
}).join('');
const names = ['An..','Be..','Dw..','Gr..','Iya..','Ka..','Ku..','Mo..','Na..','Per..','Sar..','Sh..','Utt..','Va..'];
el('bars').innerHTML = line('M277 386.500h264M277 423.500h264', '#eee') + columns(counts, 410) + columns(prices, 444) +
  line('M222 376.500h320M222 410.500h320M222 444.500h320M282.500 356v117M541.500 356v117', '#c4c4c4') +
  `<text class="head" x="388" y="371" textLength="48">Location</text><text class="axis" x="261" y="391">5K</text><text class="axis" x="260" y="428">5B</text>` +
  `<text class="head" transform="translate(242 440) rotate(-90)" textLength="64">Price Interc</text><text class="head" transform="translate(259 401) rotate(-90)">om</text>` +
  names.map((n, i) => `<text class="axis" text-anchor="end" transform="translate(${299 + i * 17.3} 446) rotate(-90)">${n}</text>`).join('');

const tiles = [[9,50,59,109,'#2c5985'],[9,109,59,160,'#2f6c95']];
const stack = (x, w, ys, colors) => ys.slice(1).forEach((y, i) => tiles.push([x, ys[i], w, y, colors[i] || colors[0]]));
const row = (y, h, xs, color) => xs.slice(1).forEach((x, i) => tiles.push([xs[i], y, x, h, color]));
stack(59, 95, [50,76,98,119,140,160], ['#7dc0c8','#88c6cb','#8ac8cb','#8ac8cb','#8bc9cc']);
row(50, 83, [95,116,136,156,174,192], '#92cccd');
stack(95, 123, [83,104,124,142,160], ['#98d0cf','#99d1cf','#9cd3d0','#9ed4d0']);
row(83, 111, [123,141,158,175,192], '#a0d5d0');
stack(123, 149, [111,129,145,160], ['#a3d7d2','#a6d8d3','#a8dad4']);
row(111, 136, [149,165,179,192], '#addbd4');
stack(149, 174, [136,148,160], ['#afddd4','#b2dfd5']);
stack(174, 192, [136,150,160], ['#b3dfd6','#b9e4d9']);
el('tree').innerHTML = tiles.map(([x, y, r, b, c]) => `<rect x="${x + .5}" y="${y + .5}" width="${r - x}" height="${b - y}" fill="${c}" stroke="#000"/>`).join('');

const values = [412,415,416,411,399,402,421,396,417,392,271,398,408,402,413,408,417,397,408,411,402,409,390,398,422,420,417,393,422,418,425,418,392,406,383,424,406,403,291,408];
const heads = 'A. A. A. B. B. B. B. D. E. E. G. . I.. K. K. K. K. K. . . N. . . O. P. P. P. R. S. S. s. S. S. T. . U. V. V. V. Y.'.split(' ');
let s = line('M277 589.500h539', '#eee') + line('M277 625.500h539', '#bbb', 'stroke-dasharray="2 1"');
values.forEach((v, i) => {
  const x = 282.5 + i * 13.33, g = Math.round(x) + .5, y = 480 + v / 3;
  if (i) s += line(`M${g} 546v117`, '#ccc');
  s += `<text class="axis" x="${x + (heads[i] === '.' ? 6 : 1)}" y="561">${heads[i]}</text>`;
  s += `<text class="axis" transform="translate(${x + 10.5} 662) rotate(-90)" textLength="29">Price</text>`;
  s += `<path d="M${x + 3} ${y - 3}l2.500 3-2.500 3-2.500-3z" fill="#4e79a7" stroke="#4e79a7" stroke-width=".5"/><path d="M${x + 9.5} 622l2.700 3-2.700 3-2.700-3z" fill="#f28e2b" stroke="#f28e2b" stroke-width=".5"/>`;
});
s += line('M282.500 526v137M815.500 526v137M222 566.500h594M222 629.500h594', '#c4c4c4');
s += '<text class="head" x="525" y="541" textLength="48">Location</text><text class="axis" x="260" y="594">5B</text><text class="axis" x="260" y="625">0B</text><text class="head" transform="translate(242 612) rotate(-90)" textLength="32">Value</text>';
el('scatter').innerHTML = s;
```
